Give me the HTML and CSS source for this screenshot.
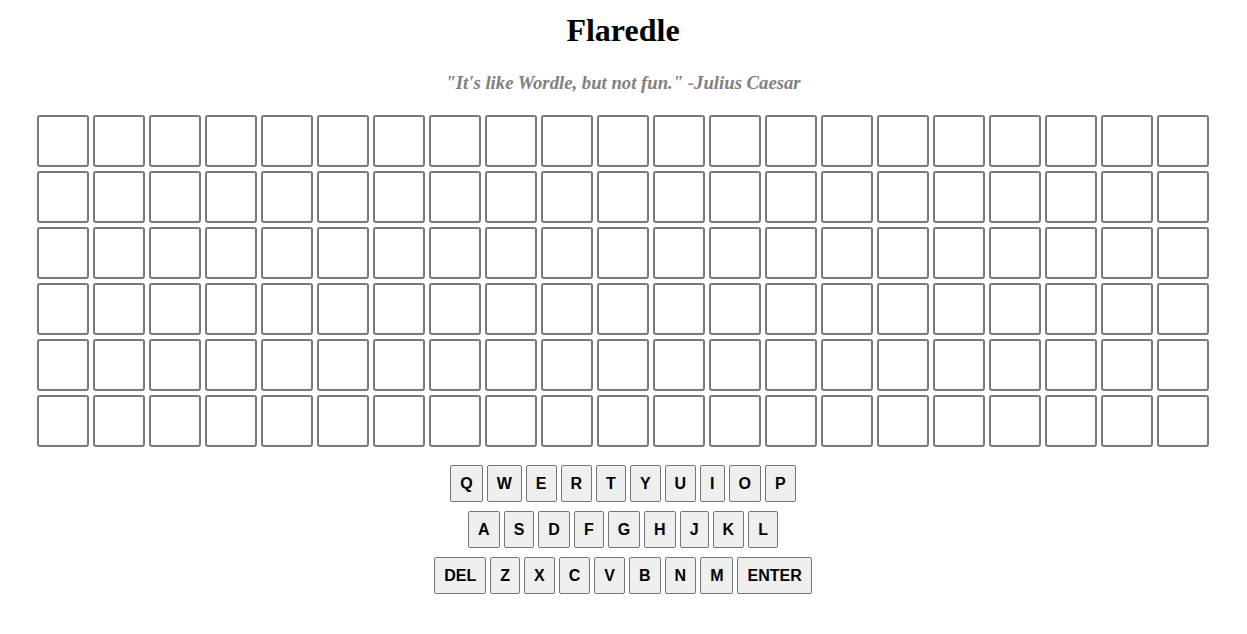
FILE: index.html
```html
<!DOCTYPE html>
<html>
<head>
<meta charset="utf-8">
<title>Flaredle</title>
<link rel="stylesheet" href="styles.css">
</head>
<body>
<div class="page">
  <h1 class="title">Flaredle</h1>
  <p class="subtitle">"It's like Wordle, but not fun." -Julius Caesar</p>
  <div class="board" id="board"></div>
  <div class="keyboard">
    <div class="krow">
      <button class="key">Q</button><button class="key">W</button><button class="key">E</button><button class="key">R</button><button class="key">T</button><button class="key">Y</button><button class="key">U</button><button class="key">I</button><button class="key">O</button><button class="key">P</button>
    </div>
    <div class="krow">
      <button class="key">A</button><button class="key">S</button><button class="key">D</button><button class="key">F</button><button class="key">G</button><button class="key">H</button><button class="key">J</button><button class="key">K</button><button class="key">L</button>
    </div>
    <div class="krow">
      <button class="key">DEL</button><button class="key">Z</button><button class="key">X</button><button class="key">C</button><button class="key">V</button><button class="key">B</button><button class="key">N</button><button class="key">M</button><button class="key">ENTER</button>
    </div>
  </div>
</div>
<script src="script.js"></script>
</body>
</html>
```
FILE: script.js
```js
var board = document.getElementById('board');
for (var i = 0; i < 6 * 21; i++) {
  var c = document.createElement('div');
  c.className = 'cell';
  board.appendChild(c);
}
```
FILE: styles.css
```css
html, body {
  margin: 0;
  padding: 0;
  background: #ffffff;
}
.page {
  display: flex;
  flex-direction: column;
  align-items: center;
  padding-right: 1px;
  font-family: "Liberation Serif", "Times New Roman", serif;
}
.title {
  margin: 12px 0 0;
  font-size: 32px;
  line-height: 37px;
  font-weight: bold;
  color: #000;
}
.subtitle {
  margin: 23px 0 0;
  font-size: 18.72px;
  line-height: 21px;
  font-weight: bold;
  font-style: italic;
  color: #808080;
}
.board {
  margin-top: 22px;
  display: grid;
  grid-template-columns: repeat(21, 52px);
  grid-auto-rows: 52px;
  gap: 4px;
}
.cell {
  box-sizing: border-box;
  border: 2px solid #7a7a7a;
  border-radius: 3px;
}
.keyboard {
  margin-top: 18px;
  display: flex;
  flex-direction: column;
  align-items: center;
  gap: 9px;
}
.krow {
  display: flex;
  gap: 4px;
}
.key {
  box-sizing: border-box;
  height: 37px;
  padding: 0 9px;
  margin: 0;
  border: 1px solid #767676;
  border-radius: 2px;
  background: #efefef;
  color: #000;
  font-family: "Liberation Sans", Arial, sans-serif;
  font-size: 16px;
  font-weight: bold;
}
```
